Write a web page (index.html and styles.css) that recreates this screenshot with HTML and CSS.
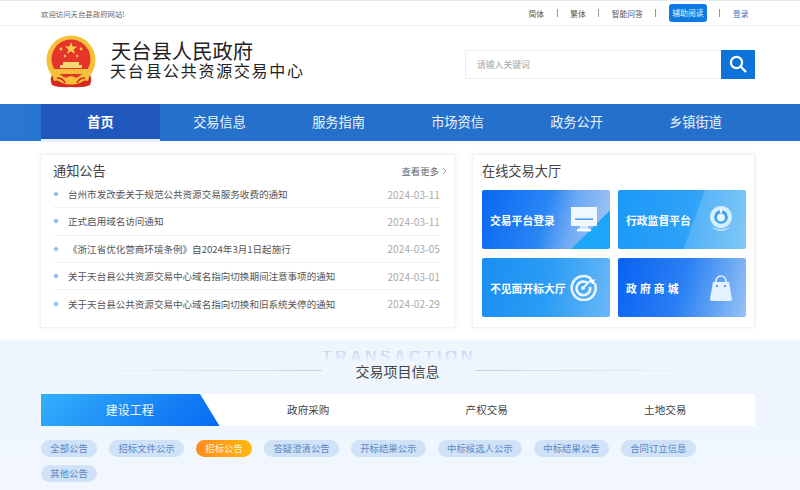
FILE: index.html
```html
<!DOCTYPE html>
<html lang="zh-CN">
<head>
<meta charset="utf-8">
<title>天台县公共资源交易中心</title>
<link rel="stylesheet" href="styles.css">
</head>
<body>
<div class="topbar">
  <div class="wrap topbar-in">
    <span class="welcome">欢迎访问天台县政府网站!</span>
    <nav class="toplinks">
      <a>简体</a><i></i><a>繁体</a><i></i><a>智能问答</a><i></i><a class="assist">辅助阅读</a><i></i><a class="login">登录</a>
    </nav>
  </div>
</div>
<header class="wrap header">
  <div class="brand">
    <svg class="emblem" width="50" height="53" viewBox="0 0 50 53">
      <path d="M7 38 Q3 44 6 50 Q12 53 25 52 Q38 53 44 50 Q47 44 43 38 Z" fill="#d8281f"/>
      <circle cx="25" cy="25" r="24.5" fill="#f5c03a"/>
      <circle cx="25" cy="24" r="19.5" fill="#e5352a"/>
      <polygon points="25,7 26.6,11.6 31.4,11.6 27.5,14.4 29,19 25,16.2 21,19 22.5,14.4 18.6,11.6 23.4,11.6" fill="#f8cf4e"/>
      <circle cx="15" cy="14" r="1.4" fill="#f8cf4e"/><circle cx="35" cy="14" r="1.4" fill="#f8cf4e"/>
      <circle cx="19" cy="21" r="1.2" fill="#f8cf4e"/><circle cx="31" cy="21" r="1.2" fill="#f8cf4e"/>
      <path d="M17 27h16v3h3v3H14v-3h3z" fill="#f8d774"/>
      <rect x="8" y="34" width="34" height="5" fill="#f5c03a"/>
      <path d="M6 39 Q14 37 19 44 Q25 38 31 44 Q36 37 44 39 L42 46 Q33 44 31 48 H19 Q17 44 8 46 Z" fill="#f5c03a"/>
      <path d="M11 43 Q17 43 19 48 M39 43 Q33 43 31 48" stroke="#d8281f" fill="none" stroke-width="1.5"/>
    </svg>
    <div class="brand-text">
      <div class="brand-1">天台县人民政府</div>
      <div class="brand-2">天台县公共资源交易中心</div>
    </div>
  </div>
  <form class="search">
    <input class="search-input" type="text" placeholder="请输入关键词">
    <button class="search-btn" type="button" aria-label="搜索">
      <svg width="18" height="18" viewBox="0 0 18 18" fill="none" stroke="#fff" stroke-width="2.2" stroke-linecap="round"><circle cx="7.5" cy="7.5" r="5.6"/><path d="M11.8 11.8 16.4 16.4"/></svg>
    </button>
  </form>
</header>
<div class="navbar">
  <nav class="wrap nav">
    <a class="active">首页</a><a>交易信息</a><a>服务指南</a><a>市场资信</a><a>政务公开</a><a>乡镇街道</a>
  </nav>
</div>
<main class="wrap cards">
  <section class="card notice">
    <div class="notice-head">
      <h2 class="card-title">通知公告</h2>
      <a class="more">查看更多 <svg width="5" height="8" viewBox="0 0 5 8" fill="none" stroke="#999" stroke-width="0.9"><path d="M1 1l3 3-3 3"/></svg></a>
    </div>
    <ul class="list">
      <li><span class="dot"></span><span class="item">台州市发改委关于规范公共资源交易服务收费的通知</span><time>2024-03-11</time></li>
      <li><span class="dot"></span><span class="item">正式启用域名访问通知</span><time>2024-03-11</time></li>
      <li><span class="dot"></span><span class="item">《浙江省优化营商环境条例》自2024年3月1日起施行</span><time>2024-03-05</time></li>
      <li><span class="dot"></span><span class="item">关于天台县公共资源交易中心域名指向切换期间注意事项的通知</span><time>2024-03-01</time></li>
      <li><span class="dot"></span><span class="item">关于天台县公共资源交易中心域名指向切换和旧系统关停的通知</span><time>2024-02-29</time></li>
    </ul>
  </section>
  <section class="card hall">
    <h2 class="card-title">在线交易大厅</h2>
    <div class="tiles">
      <a class="tile t1"><span>交易平台登录</span>
        <svg width="26" height="25" viewBox="0 0 26 25"><rect x="0" y="0" width="26" height="19" fill="#f0f7ff"/><rect x="4" y="11.5" width="18" height="1.3" fill="#2b8ae8"/><path d="M9 19h8l1 3h-10z" fill="#cfe6ff"/><rect x="6" y="22" width="14" height="2.4" fill="#fff"/></svg></a>
      <a class="tile t2"><span>行政监督平台</span>
        <svg width="24" height="27" viewBox="0 0 24 27"><circle cx="12" cy="11" r="11" fill="#d6ecff"/><circle cx="12" cy="11" r="6.8" fill="#3aa0ee"/><circle cx="12" cy="11.5" r="4" fill="#e8f5ff"/><rect x="11" y="3" width="2" height="4" fill="#fff"/><path d="M2 21Q12 29 22 21Q12 25 2 21" fill="#bfe0fb"/></svg></a>
      <a class="tile t3"><span>不见面开标大厅</span>
        <svg width="27" height="27" viewBox="0 0 27 27" fill="none" stroke="#e8f4ff" stroke-width="2.6"><path d="M21 4.5A12 12 0 1 0 25 10"/><path d="M17.5 9A6.8 6.8 0 1 0 20 13"/><circle cx="13" cy="14" r="2" fill="#e8f4ff" stroke="none"/><path d="M13 14 22 5" stroke-width="1.8"/><path d="M20 3l2 3 3-1-1 3 2 2-4 0-2-3z" fill="#fff" stroke="none"/></svg></a>
      <a class="tile t4"><span class="spaced">政府商城</span>
        <svg width="24" height="26" viewBox="0 0 24 26"><path d="M7 9V6a5 5 0 0 1 10 0v3" fill="none" stroke="#e4f1ff" stroke-width="1.6"/><path d="M4 7h16l3 17a2 2 0 0 1-2 2H3a2 2 0 0 1-2-2z" fill="#e4f1ff"/><circle cx="8" cy="11" r="1.1" fill="#3f86e8"/><circle cx="16" cy="11" r="1.1" fill="#3f86e8"/></svg></a>
    </div>
  </section>
</main>
<section class="trade">
  <div class="trade-title">
    <span class="line line-l"></span>
    <div class="title-box"><span class="watermark">TRANSACTION</span><h2>交易项目信息</h2></div>
    <span class="line line-r"></span>
  </div>
  <div class="wrap">
    <div class="tabs">
      <a class="tab tab-active">建设工程</a><a class="tab">政府采购</a><a class="tab">产权交易</a><a class="tab">土地交易</a>
    </div>
    <div class="pills">
      <a>全部公告</a><a>招标文件公示</a><a class="on">招标公告</a><a>答疑澄清公告</a><a>开标结果公示</a><a>中标候选人公示</a><a>中标结果公告</a><a>合同订立信息</a><a>其他公告</a>
    </div>
  </div>
</section>
</body>
</html>
```
FILE: styles.css
```css
* { box-sizing: border-box; }
html, body { margin: 0; padding: 0; }
body {
  width: 800px; height: 490px; overflow: hidden; background: #fff;
  font-family: "Noto Sans CJK SC", "Liberation Sans", sans-serif; color: #444;
}
a { color: inherit; text-decoration: none; }
h2, ul { margin: 0; padding: 0; }
.wrap { width: 714px; margin-left: 41px; }

.topbar { height: 26px; border-top: 1px solid #e6ebf3; border-bottom: 1px solid #eef0f3; }
.topbar-in { height: 24px; display: flex; justify-content: space-between; align-items: center; }
.welcome { font-size: 7.4px; color: #666; }
.toplinks { display: flex; align-items: center; font-size: 7.8px; color: #555; margin-right: 6.5px; }
.toplinks i { width: 1px; height: 8px; background: #999; margin: 0 12.5px; }
.assist { width: 38px; height: 18px; line-height: 18px; text-align: center; background: #0f7ae5; color: #e8f3ff; border-radius: 3px; }
.login { color: #4a6fb0; }

.header { height: 78px; display: flex; justify-content: space-between; align-items: center; }
.brand { display: flex; align-items: center; gap: 15px; margin-left: 5px; margin-bottom: 8px; }
.brand-text { color: #222; line-height: 1; }
.brand-1 { font-size: 20.3px; line-height: 22px; font-weight: 400; font-family: serif, "Noto Sans CJK SC"; }
.brand-2 { font-size: 16px; letter-spacing: 1.7px; line-height: 18px; margin-left: -1px; font-family: serif, "Noto Sans CJK SC"; }
.search { display: flex; width: 290px; height: 29px; margin-bottom: 2px; }
.search-input {
  flex: 1; min-width: 0; border: 1px solid #eeeeee; border-right: 0; padding: 0 11px; outline: 0;
  font: 8.8px "Noto Sans CJK SC", sans-serif; color: #999;
}
.search-input::placeholder { color: #a5a5a5; }
.search-btn { width: 34px; border: 0; padding: 0; background: #0c73da; display: flex; align-items: center; justify-content: center; }

.navbar { height: 37px; background: linear-gradient(90deg, #2a78d2, #2470cb 15%, #2470cb); }
.nav { display: grid; grid-template-columns: repeat(6, 119px); height: 37px; }
.nav a { font-size: 13.2px; line-height: 35px; text-align: center; color: #eef5ff; }
.nav .active { background: #1f57bc; border-bottom: 3px solid #e4effb; font-weight: 700; color: #fff; }

.cards { display: flex; justify-content: space-between; height: 200px; padding-top: 13px; width: 715px; margin-left: 40px; }
.card { background: #fff; border: 1px solid #f1f2f5; box-shadow: 0 0 5px rgba(40, 70, 120, 0.08); height: 174px; }
.card-title { font-size: 13.2px; font-weight: 400; color: #444; line-height: 18px; }
.notice { width: 415px; padding: 7px 7px 0 12px; }
.notice-head { display: flex; justify-content: space-between; align-items: center; }
.more { font-size: 9.4px; color: #666; display: flex; align-items: center; gap: 3px; margin-right: 0; }
.list { list-style: none; margin-top: 1px; margin-right: 7px; }
.list li { height: 27.3px; display: flex; align-items: center; border-bottom: 1px solid #f3f3f3; margin-left: 0; }
.list li:last-child { border-bottom: 0; }
.dot { width: 4px; height: 4px; margin-left: 1px; background: #8fc3f2; transform: rotate(45deg); flex: none; }
.item { flex: 1; margin-left: 10px; font-size: 9.55px; color: #555; white-space: nowrap; }
time { font-size: 10px; color: #aaa; letter-spacing: 0.12px; }

.hall { width: 283px; padding: 7px 9px 0 9px; }
.tiles { display: grid; grid-template-columns: 128px 128px; grid-auto-rows: 59px; gap: 9px 8px; margin-top: 10px; }
.tile { border-radius: 2px; display: flex; align-items: center; justify-content: space-between; padding: 0 13px 0 8px; color: #fff; font-size: 10.8px; font-weight: 700; white-space: nowrap; }
.spaced { letter-spacing: 3.1px; }
.t1 { background:
  linear-gradient(135deg, transparent 79%, #1da6f8 79.5%),
  linear-gradient(105deg, #0a67f3 0, #2a86f4 48%, #6ea9f4 68%, #a9c9f6 100%); }
.t2 { background:
  linear-gradient(110deg, transparent 58%, rgba(255,255,255,.16) 58.5%),
  linear-gradient(100deg, #1b99f8 0, #2ea2f8 55%, #69bdf4 100%); }
.t3 { background:
  linear-gradient(100deg, #1a8ff3 0, #2a9cf5 50%, #6ab8f6 100%); }
.t4 { background:
  linear-gradient(105deg, #0a61f3 0, #2a80f3 50%, #6aa8f4 80%, #98c2f6 100%); }

.trade { height: 149px; background: linear-gradient(180deg, #edf5fd 0, #f2f7fe 100%); box-shadow: 0 -1px 3px rgba(90, 120, 170, .06); }
.trade-title { display: flex; align-items: center; justify-content: flex-start; height: 53px; padding: 6px 0 0 88px; }
.line { height: 1px; }
.line-l { width: 234px; background: linear-gradient(90deg, transparent, #c6d2ea); }
.line-r { width: 230px; background: linear-gradient(90deg, #c6d2ea, transparent); }
.title-box { position: relative; width: 153px; padding-right: 2px; text-align: center; }
.title-box h2 { position: relative; font-size: 14px; font-weight: 400; color: #444; line-height: 16px; }
.watermark {
  position: absolute; left: 0; top: -12px; width: 153px; height: 12px;
  font-family: "Liberation Sans", sans-serif; font-size: 16px; font-weight: 700; letter-spacing: 3.4px;
  white-space: nowrap; line-height: 12px;
  background: linear-gradient(180deg, #c2d6f4, #f0f6fd 95%);
  -webkit-background-clip: text; background-clip: text; color: transparent;
}

.tabs { display: grid; grid-template-columns: repeat(4, 178.5px); height: 32px; background: #fff; }
.tab { font-size: 10.6px; line-height: 32px; text-align: center; color: #444; padding-right: 1px; }
.tab-active { font-size: 12px; color: #f2f8ff; background: linear-gradient(135deg, #33b0fb, #0669f2); clip-path: polygon(0 0, 159px 0, 178.5px 100%, 0 100%); }
.pills { display: flex; flex-wrap: wrap; gap: 8px 12px; padding-top: 14px; }
.pills a { height: 17px; line-height: 17px; padding: 0 9.3px; border-radius: 9px; background: #cfe2f8; color: #5b86c4; font-size: 9.4px; }
.pills .on { background: linear-gradient(90deg, #ff8a1c, #ffb810); color: #fff3dc; }
```
